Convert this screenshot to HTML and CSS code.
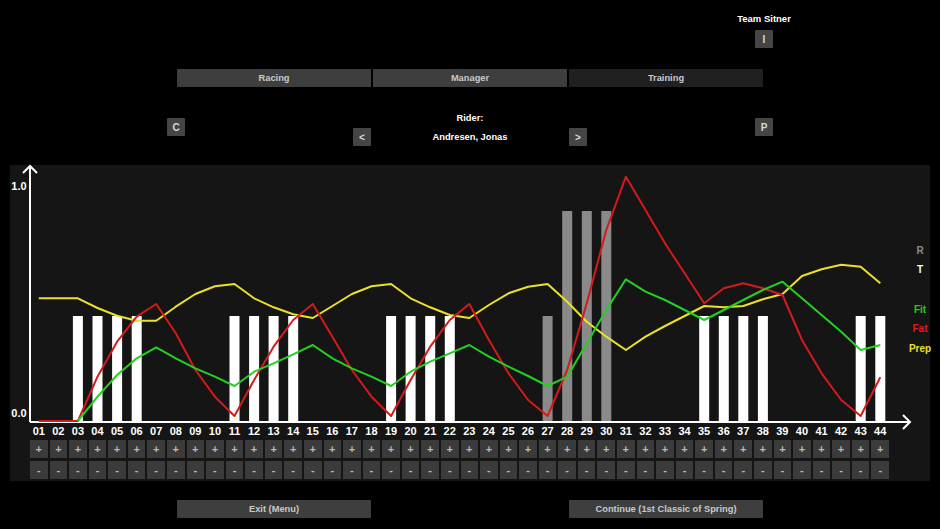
FILE: index.html
```html
<!DOCTYPE html>
<html>
<head>
<meta charset="utf-8">
<link rel="stylesheet" href="styles.css">
</head>
<body>
<div class="stage">
  <div class="team-row">
    <div class="team">
      <div class="team-name">Team Sitner</div>
      <div class="sbtn">I</div>
    </div>
  </div>
  <div class="nav">
    <div class="nbtn">Racing</div>
    <div class="nbtn">Manager</div>
    <div class="nbtn active">Training</div>
  </div>
  <div class="rider-row">
    <div class="sbtn edge">C</div>
    <div class="rider-mid">
      <div class="sbtn arrow">&lt;</div>
      <div class="rider-text">
        <div class="rt-line">Rider:</div>
        <div class="rt-line">Andresen, Jonas</div>
      </div>
      <div class="sbtn arrow">&gt;</div>
    </div>
    <div class="sbtn edge">P</div>
  </div>
</div>

<div class="panel">
  <svg class="chart" width="920" height="260" viewBox="0 0 920 260">
    <g class="bars-white" fill="#ffffff">
      <rect x="62.9" y="151" width="10" height="105"/>
      <rect x="82.5" y="151" width="10" height="105"/>
      <rect x="102.1" y="151" width="10" height="105"/>
      <rect x="121.7" y="151" width="10" height="105"/>
      <rect x="219.5" y="151" width="10" height="105"/>
      <rect x="239.1" y="151" width="10" height="105"/>
      <rect x="258.6" y="151" width="10" height="105"/>
      <rect x="278.2" y="151" width="10" height="105"/>
      <rect x="376.1" y="151" width="10" height="105"/>
      <rect x="395.6" y="151" width="10" height="105"/>
      <rect x="415.2" y="151" width="10" height="105"/>
      <rect x="434.8" y="151" width="10" height="105"/>
      <rect x="689.2" y="151" width="10" height="105"/>
      <rect x="708.8" y="151" width="10" height="105"/>
      <rect x="728.3" y="151" width="10" height="105"/>
      <rect x="747.9" y="151" width="10" height="105"/>
      <rect x="845.7" y="151" width="10" height="105"/>
      <rect x="865.3" y="151" width="10" height="105"/>
    </g>
    <g class="bars-gray" fill="#8a8a8a">
      <rect x="532.6" y="151" width="10" height="105"/>
      <rect x="552.2" y="46" width="10" height="210"/>
      <rect x="571.8" y="46" width="10" height="210"/>
      <rect x="591.3" y="46" width="10" height="210"/>
    </g>
    <g class="axes" stroke="#ffffff" stroke-width="2" fill="none">
      <line x1="20" y1="257" x2="900" y2="257"/>
      <line x1="20" y1="257" x2="20" y2="1"/>
      <polyline points="13,8 20,1 27,8"/>
      <polyline points="893,250 900,257 893,264"/>
    </g>
    <polyline class="ln" stroke="#ebe02c" points="28.8,133.3 48.4,133.3 67.9,133.3 87.5,143 107.1,150.7 126.7,155.7 146.2,155.7 165.8,141.7 185.4,129 204.9,121.3 224.5,119 244.1,133.3 263.6,142.3 283.2,149.3 302.8,153 322.4,141 341.9,129 361.5,121.3 381.1,119 400.6,133.3 420.2,142.3 439.8,150 459.3,153 478.9,140 498.5,128.3 518.1,121.7 537.6,119 557.2,136.7 576.8,156.7 596.3,171.7 615.9,185 635.5,171.7 655,161 674.6,151 694.2,141 713.8,142.3 733.3,141 752.9,134.3 772.5,129 792,111 811.6,104.3 831.2,99.7 850.7,101.7 870.3,118.3"/>
    <polyline class="ln" stroke="#d41a1a" points="28.8,256 48.4,256 67.9,256 87.5,211.7 107.1,176.7 126.7,151.7 146.2,139 165.8,168.3 185.4,205 204.9,231.7 224.5,251 244.1,215 263.6,181.7 283.2,155 302.8,139 322.4,171.7 341.9,205 361.5,231.7 381.1,251 400.6,215 420.2,181.7 439.8,155 459.3,139 478.9,175 498.5,208.3 518.1,235 537.6,251 557.2,205 576.8,138.3 596.3,65 615.9,11.7 635.5,45 655,78.3 674.6,108.3 694.2,138.3 713.8,123.3 733.3,118.3 752.9,123.3 772.5,130 792,175 811.6,208.3 831.2,235 850.7,251 870.3,212.3"/>
    <polyline class="ln" stroke="#22d022" points="67.9,256 87.5,231.7 107.1,210 126.7,193.3 146.2,182.3 165.8,193.3 185.4,203.3 204.9,211.7 224.5,221 244.1,206.7 263.6,198.3 283.2,189.3 302.8,180 322.4,193.3 341.9,203.3 361.5,211.7 381.1,221 400.6,206.7 420.2,196.7 439.8,188.3 459.3,180 478.9,191.7 498.5,201.7 518.1,211 537.6,221 557.2,211.7 576.8,178.3 596.3,145 615.9,114.3 635.5,126.7 655,135 674.6,145 694.2,155 713.8,145 733.3,135 752.9,125 772.5,116.7 792,133.3 811.6,150 831.2,166.7 850.7,185 870.3,180"/>
    <g class="ylab">
      <text x="9" y="25">1.0</text>
      <text x="9" y="252">0.0</text>
    </g>
    <g class="legend">
      <text x="910" y="89" fill="#8c8c8c">R</text>
      <text x="910" y="108" fill="#ffffff">T</text>
      <text x="910" y="148" fill="#22d022">Fit</text>
      <text x="910" y="167" fill="#e01c1c">Fat</text>
      <text x="910" y="187" fill="#ebe02c">Prep</text>
    </g>
  </svg>
  <div class="days">
    <span>01</span><span>02</span><span>03</span><span>04</span><span>05</span><span>06</span><span>07</span><span>08</span><span>09</span><span>10</span><span>11</span>
    <span>12</span><span>13</span><span>14</span><span>15</span><span>16</span><span>17</span><span>18</span><span>19</span><span>20</span><span>21</span><span>22</span>
    <span>23</span><span>24</span><span>25</span><span>26</span><span>27</span><span>28</span><span>29</span><span>30</span><span>31</span><span>32</span><span>33</span>
    <span>34</span><span>35</span><span>36</span><span>37</span><span>38</span><span>39</span><span>40</span><span>41</span><span>42</span><span>43</span><span>44</span>
  </div>
  <div class="pm">
    <span>+</span><span>+</span><span>+</span><span>+</span><span>+</span><span>+</span><span>+</span><span>+</span><span>+</span><span>+</span><span>+</span>
    <span>+</span><span>+</span><span>+</span><span>+</span><span>+</span><span>+</span><span>+</span><span>+</span><span>+</span><span>+</span><span>+</span>
    <span>+</span><span>+</span><span>+</span><span>+</span><span>+</span><span>+</span><span>+</span><span>+</span><span>+</span><span>+</span><span>+</span>
    <span>+</span><span>+</span><span>+</span><span>+</span><span>+</span><span>+</span><span>+</span><span>+</span><span>+</span><span>+</span><span>+</span>
  </div>
  <div class="pm minus">
    <span>-</span><span>-</span><span>-</span><span>-</span><span>-</span><span>-</span><span>-</span><span>-</span><span>-</span><span>-</span><span>-</span>
    <span>-</span><span>-</span><span>-</span><span>-</span><span>-</span><span>-</span><span>-</span><span>-</span><span>-</span><span>-</span><span>-</span>
    <span>-</span><span>-</span><span>-</span><span>-</span><span>-</span><span>-</span><span>-</span><span>-</span><span>-</span><span>-</span><span>-</span>
    <span>-</span><span>-</span><span>-</span><span>-</span><span>-</span><span>-</span><span>-</span><span>-</span><span>-</span><span>-</span><span>-</span>
  </div>
</div>

<div class="stage">
  <div class="footer">
    <div class="nbtn wide">Exit (Menu)</div>
    <div class="nbtn wide">Continue (1st Classic of Spring)</div>
  </div>
</div>
</body>
</html>
```

FILE: styles.css
```css
html, body {
  margin: 0;
  padding: 0;
  background: #000;
}
body {
  width: 940px;
  height: 529px;
  overflow: hidden;
  font-family: "Liberation Sans", Arial, sans-serif;
  font-weight: bold;
  font-size: 11px;
  color: #fff;
}
.stage {
  width: 606px;
  margin: 0 auto;
}
.team-row {
  display: flex;
  justify-content: flex-end;
  padding-top: 13px;
}
.team {
  width: 18px;
  display: flex;
  flex-direction: column;
  align-items: center;
  gap: 5px;
}
.team-name {
  white-space: nowrap;
  line-height: 12px;
  font-size: 9.5px;
  color: #fff;
}
.sbtn {
  width: 18px;
  height: 18px;
  background: #454545;
  color: #d8d8d8;
  display: flex;
  align-items: center;
  justify-content: center;
  font-size: 10px;
  border-radius: 1px;
  flex: none;
}
.nav {
  margin: 21px 10px 0;
  display: grid;
  grid-template-columns: repeat(3, 1fr);
  gap: 2px;
}
.nbtn {
  height: 18px;
  background: #3e3e3e;
  color: #c9c9c9;
  display: flex;
  align-items: center;
  justify-content: center;
  font-size: 9.3px;
  border-radius: 1px;
  white-space: nowrap;
}
.nbtn.active {
  background: #202020;
}
.rider-row {
  display: flex;
  align-items: flex-start;
  margin-top: 25px;
  height: 34px;
}
.sbtn.edge {
  margin-top: 6px;
}
.rider-mid {
  flex: 1;
  display: flex;
  justify-content: center;
}
.sbtn.arrow {
  margin-top: 16px;
}
.rider-text {
  width: 198px;
  display: flex;
  flex-direction: column;
  align-items: center;
  gap: 7px;
}
.rt-line {
  line-height: 12px;
  font-size: 9.3px;
  white-space: nowrap;
}
.panel {
  margin: 19px 10px 0;
  width: 920px;
  height: 316px;
  background: #151515;
  display: flex;
  flex-direction: column;
}
.chart {
  display: block;
  overflow: visible;
  flex: none;
}
.ln {
  fill: none;
  stroke-width: 2;
  stroke-linejoin: round;
}
.ylab text {
  fill: #fff;
  font-size: 11px;
  font-weight: bold;
  text-anchor: middle;
}
.legend text {
  font-size: 10px;
  font-weight: bold;
  text-anchor: middle;
}
.days, .pm {
  margin-left: 20px;
  width: 859px;
  display: grid;
  grid-template-columns: repeat(44, 1fr);
  column-gap: 2px;
}
.days span {
  text-align: center;
  line-height: 12px;
  height: 12px;
  font-size: 11px;
  color: #fff;
}
.pm {
  margin-top: 3px;
}
.pm span {
  height: 18px;
  background: #3b3b3b;
  color: #b8b8b8;
  display: flex;
  align-items: center;
  justify-content: center;
  font-size: 11px;
}
.footer {
  margin: 19px 10px 0;
  display: flex;
  justify-content: space-between;
}
.nbtn.wide {
  width: 194px;
}
```
